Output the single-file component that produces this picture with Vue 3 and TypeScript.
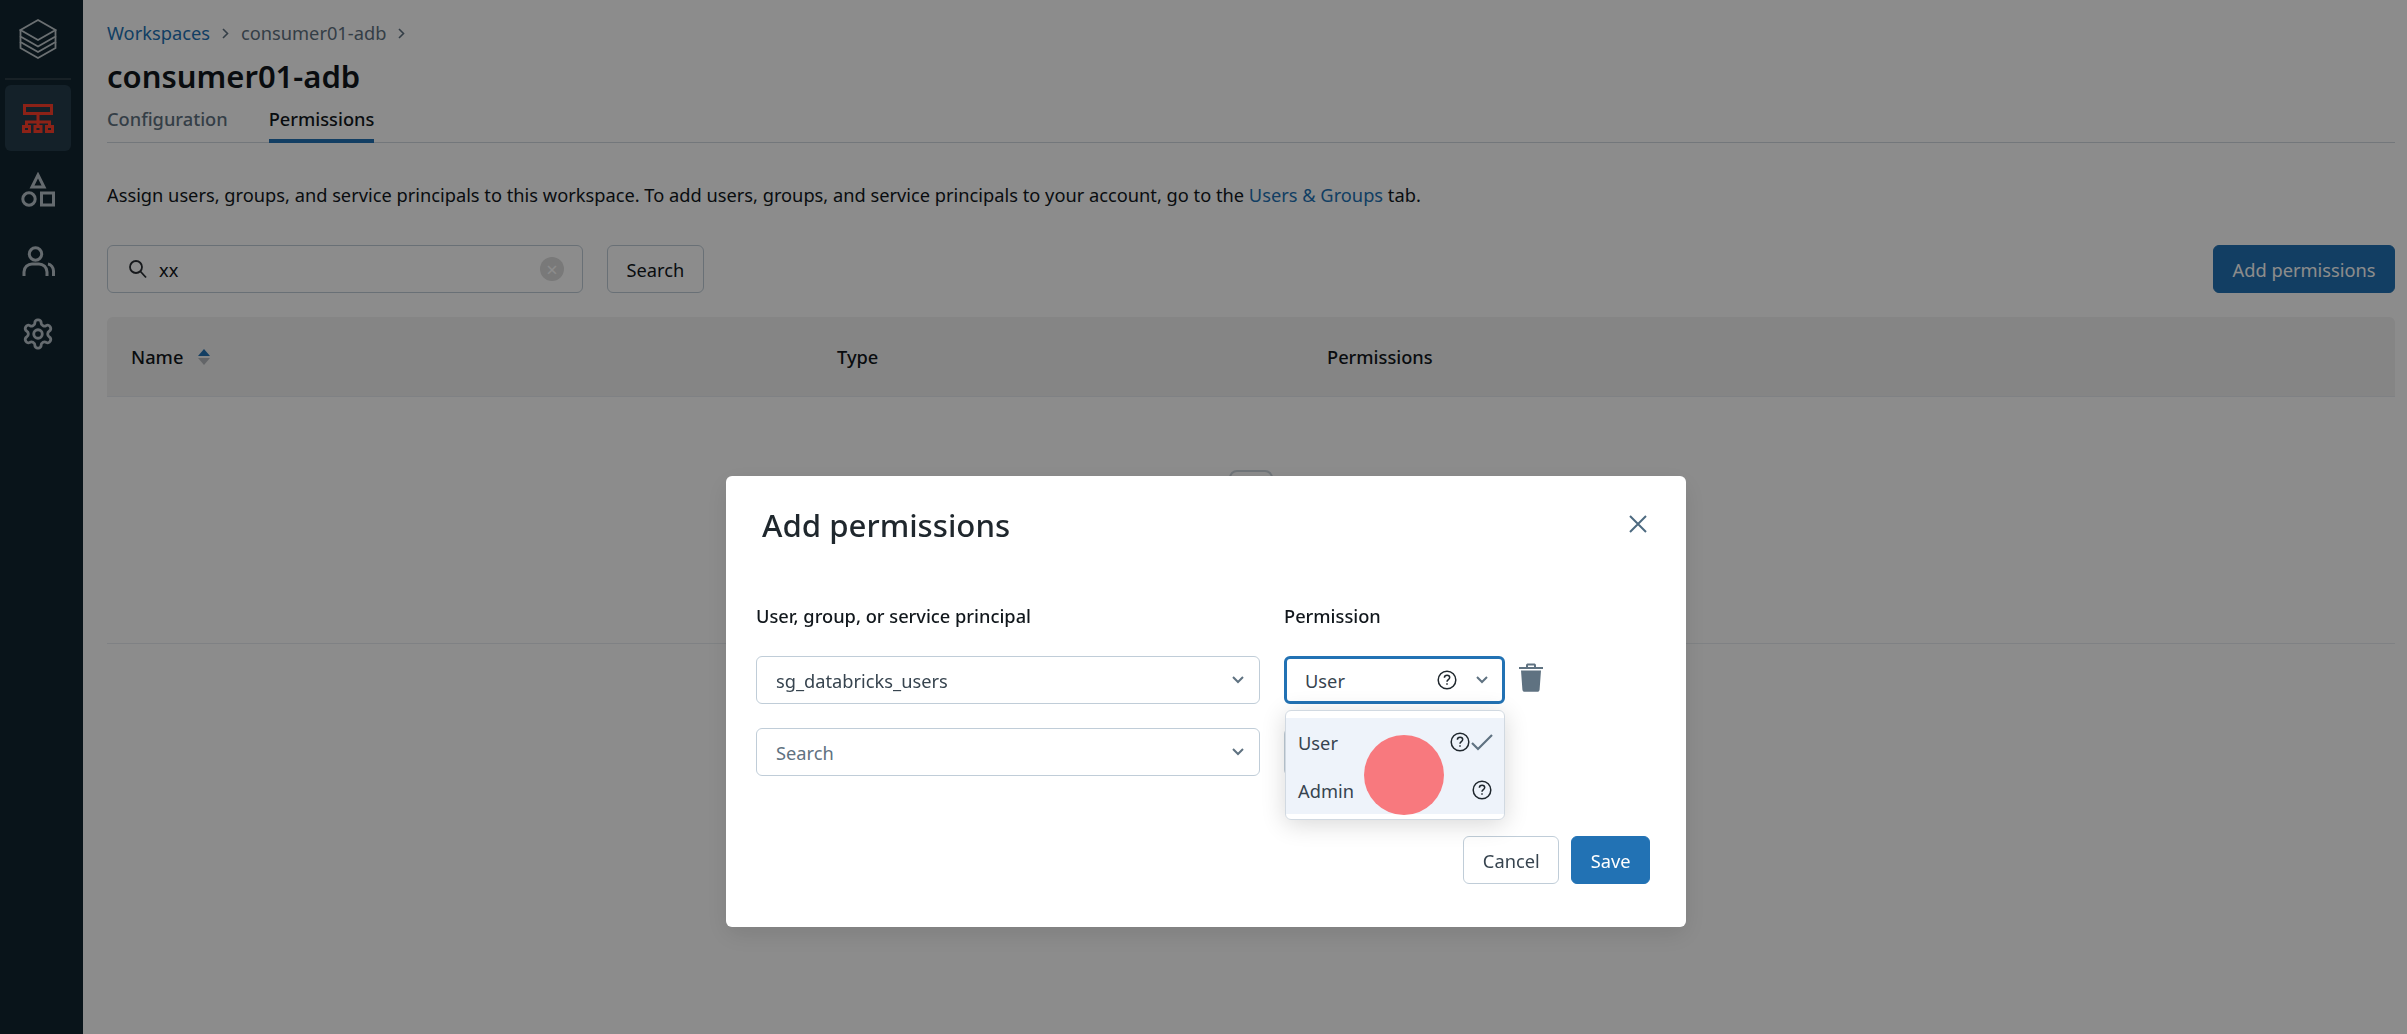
<template>
  <div class="page">
    <aside class="sidebar">
      <div class="logo">
        <svg width="40" height="42" viewBox="0 0 40 42" fill="none" stroke="#c4ccd0" stroke-width="1.8" stroke-linejoin="miter">
          <path d="M20 2 37.500 12 20 22 2.500 12Z" />
          <path d="M2.500 12v6.500L20 28.500l17.500-10V12" />
          <path d="M2.500 18.500V24L20 34l17.500-10v-5.500" />
          <path d="M2.500 24v6L20 40l17.500-10v-6" />
        </svg>
      </div>
      <div class="nav-divider"></div>
      <div class="nav-item active">
        <svg width="36" height="32" viewBox="0 0 36 32" fill="none" stroke="#ff3f2b" stroke-width="3">
          <rect x="4.500" y="3.500" width="27" height="8" />
          <path d="M18 13v10M6.500 23v-3h23v3" />
          <rect x="3.500" y="24.500" width="6" height="5" />
          <rect x="15" y="24.500" width="6" height="5" />
          <rect x="26.500" y="24.500" width="6" height="5" />
        </svg>
      </div>
      <div class="nav-item">
        <svg width="36" height="36" viewBox="0 0 36 36" fill="none" stroke="#b9c3ca" stroke-width="3">
          <path d="M18 3 24 15H12Z" />
          <circle cx="9" cy="27" r="6.200" />
          <rect x="21.500" y="21" width="12" height="12" />
        </svg>
      </div>
      <div class="nav-item">
        <svg width="34" height="34" viewBox="0 0 34 34" fill="none" stroke="#b9c3ca" stroke-width="3">
          <circle cx="14.500" cy="9" r="6.200" />
          <path d="M3 31v-4c0-5 4-8 8-8h7c4 0 8 3 8 8v4" />
          <path d="M27 19c3 .5 5.500 3.500 5.500 7v5" />
        </svg>
      </div>
      <div class="nav-item">
        <svg width="34" height="34" viewBox="0 0 24 24" fill="none" stroke="#b9c3ca" stroke-width="2">
          <path d="M12.220 2h-.44a2 2 0 0 0-2 2v.18a2 2 0 0 1-1 1.730l-.43.25a2 2 0 0 1-2 0l-.15-.08a2 2 0 0 0-2.730.73l-.22.38a2 2 0 0 0 .73 2.730l.15.1a2 2 0 0 1 1 1.720v.51a2 2 0 0 1-1 1.740l-.15.09a2 2 0 0 0-.73 2.730l.22.38a2 2 0 0 0 2.730.73l.15-.08a2 2 0 0 1 2 0l.43.25a2 2 0 0 1 1 1.730V20a2 2 0 0 0 2 2h.44a2 2 0 0 0 2-2v-.18a2 2 0 0 1 1-1.730l.43-.25a2 2 0 0 1 2 0l.15.08a2 2 0 0 0 2.730-.73l.22-.39a2 2 0 0 0-.73-2.730l-.15-.08a2 2 0 0 1-1-1.740v-.5a2 2 0 0 1 1-1.740l.15-.09a2 2 0 0 0 .73-2.730l-.22-.38a2 2 0 0 0-2.730-.73l-.15.08a2 2 0 0 1-2 0l-.43-.25a2 2 0 0 1-1-1.730V4a2 2 0 0 0-2-2z" />
          <circle cx="12" cy="12" r="3" />
        </svg>
      </div>
    </aside>

    <main class="content">
      <nav class="breadcrumb">
        <a class="link">Workspaces</a>
        <svg class="crumb-sep" width="7" height="11" viewBox="0 0 7 11" fill="none" stroke="#5f7281" stroke-width="1.600"><path d="m1 1 4.500 4.500L1 10" /></svg>
        <span class="muted">consumer01-adb</span>
        <svg class="crumb-sep" width="7" height="11" viewBox="0 0 7 11" fill="none" stroke="#5f7281" stroke-width="1.600"><path d="m1 1 4.500 4.500L1 10" /></svg>
      </nav>
      <h1 class="page-title">consumer01-adb</h1>
      <div class="tabs">
        <span class="tab">Configuration</span>
        <span class="tab selected">Permissions</span>
      </div>
      <p class="intro">
        Assign users, groups, and service principals to this workspace. To add users, groups, and service principals to your account, go to the
        <a class="link">Users &amp; Groups</a> tab.
      </p>
      <div class="toolbar">
        <div class="search-box">
          <svg width="20" height="20" viewBox="0 0 20 20" fill="none" stroke="#2a2f33" stroke-width="1.800">
            <circle cx="8" cy="8" r="6" />
            <path d="m12.500 12.500 5.500 6" />
          </svg>
          <span class="search-value">xx</span>
          <span class="clear-btn">×</span>
        </div>
        <button class="btn">Search</button>
        <button class="btn primary add-btn">Add permissions</button>
      </div>
      <div class="table-head">
        <div class="cell name-cell">
          Name
          <span class="sort"><i class="up"></i><i class="down"></i></span>
        </div>
        <div class="cell type-cell">Type</div>
        <div class="cell">Permissions</div>
      </div>
      <div class="table-empty"><div class="empty-icon"></div></div>
    </main>

    <div class="overlay">
      <section class="modal">
        <header class="modal-head">
          <h2>Add permissions</h2>
          <svg class="close" width="20" height="20" viewBox="0 0 20 20" stroke="#4d6a80" stroke-width="2">
            <path d="m2 2 16 16M18 2 2 18" />
          </svg>
        </header>
        <div class="form-grid">
          <label>User, group, or service principal</label>
          <label>Permission</label>
          <span></span>

          <div class="select">
            <span class="value">sg_databricks_users</span>
            <svg class="chev" width="12" height="8" viewBox="0 0 12 8" fill="none" stroke="#5f7281" stroke-width="2"><path d="m1 1 5 5 5-5" /></svg>
          </div>
          <div class="perm-wrap">
            <div class="select focused">
              <span class="value">User</span>
              <svg class="help" width="20" height="20" viewBox="0 0 20 20" fill="none" stroke="#1f272d" stroke-width="1.500">
                <circle cx="10" cy="10" r="8.800" />
                <path d="M7.400 7.800c0-1.500 1.200-2.500 2.700-2.500s2.600 1 2.600 2.300c0 2-2.700 2-2.700 4.100" />
                <path d="M10 13.300v1.500" />
              </svg>
              <svg class="chev" width="12" height="8" viewBox="0 0 12 8" fill="none" stroke="#5f7281" stroke-width="2"><path d="m1 1 5 5 5-5" /></svg>
            </div>
            <div class="menu">
              <div class="menu-list">
                <div class="menu-row">
                  <span>User</span>
                  <svg class="row-help" width="20" height="20" viewBox="0 0 20 20" fill="none" stroke="#1f272d" stroke-width="1.500">
                    <circle cx="10" cy="10" r="8.800" />
                    <path d="M7.400 7.800c0-1.500 1.200-2.500 2.700-2.500s2.600 1 2.600 2.300c0 2-2.700 2-2.700 4.100" />
                    <path d="M10 13.300v1.500" />
                  </svg>
                  <svg class="check" width="22" height="18" viewBox="0 0 22 18" fill="none" stroke="#5f7281" stroke-width="2.200"><path d="m1 10 6 6L21 2" /></svg>
                </div>
                <div class="menu-row">
                  <span>Admin</span>
                  <svg class="row-help" width="20" height="20" viewBox="0 0 20 20" fill="none" stroke="#1f272d" stroke-width="1.500">
                    <circle cx="10" cy="10" r="8.800" />
                    <path d="M7.400 7.800c0-1.500 1.200-2.500 2.700-2.500s2.600 1 2.600 2.300c0 2-2.700 2-2.700 4.100" />
                    <path d="M10 13.300v1.500" />
                  </svg>
                </div>
              </div>
            </div>
          </div>
          <svg class="trash" width="26" height="29" viewBox="0 0 26 29" fill="#5f7281">
            <path d="M8 2.500C8 1 9 .5 10 .5h6c1 0 2 .5 2 2V4h7v2H1V4h7zM10 2.500V4h6V2.500z" />
            <path d="M3 7.500h20l-1.400 19c-.1 1.400-1 2.300-2.400 2.300H6.800c-1.400 0-2.300-.9-2.400-2.300z" />
          </svg>

          <div class="select">
            <span class="value placeholder">Search</span>
            <svg class="chev" width="12" height="8" viewBox="0 0 12 8" fill="none" stroke="#5f7281" stroke-width="2"><path d="m1 1 5 5 5-5" /></svg>
          </div>
          <div class="select"></div>
          <span></span>
        </div>
        <footer class="modal-foot">
          <button class="btn">Cancel</button>
          <button class="btn primary">Save</button>
        </footer>
      </section>
      <div class="cursor-dot"></div>
    </div>
  </div>
</template>

<script setup lang="ts">
// static screen, nothing to wire up
</script>

<style>
html,
body {
  margin: 0;
  background: #fff;
}
</style>

<style scoped>
.page {
  display: flex;
  height: 1034px;
  overflow: hidden;
  font-family: "Noto Sans", sans-serif;
  font-size: 18.25px;
  color: #11171c;
  background: #fff;
}

.sidebar {
  width: 83px;
  flex-shrink: 0;
  box-sizing: border-box;
  padding-left: 5px;
  background: #122631;
  display: flex;
  flex-direction: column;
}
.logo {
  width: 66px;
  height: 78px;
  display: flex;
  align-items: center;
  justify-content: center;
}
.nav-divider {
  width: 66px;
  height: 2px;
  background: #2c3c46;
  margin-bottom: 5px;
}
.nav-item {
  width: 66px;
  height: 66px;
  margin-bottom: 6px;
  border-radius: 6px;
  display: flex;
  align-items: center;
  justify-content: center;
}
.nav-item.active {
  background: #263d4c;
}

.content {
  flex: 1;
  min-width: 0;
  padding: 21px 12px 0 24px;
}
.breadcrumb {
  height: 24px;
  line-height: 24px;
  display: flex;
  align-items: center;
  gap: 12px;
}
.link {
  color: #2272b4;
}
.muted {
  color: #5f7281;
}
.page-title {
  margin: 11px 0 0;
  height: 40px;
  line-height: 40px;
  font-size: 31px;
  font-weight: 600;
}
.tabs {
  display: flex;
  gap: 41px;
  height: 47px;
  border-bottom: 1px solid #d1d9e1;
  box-sizing: border-box;
}
.tab {
  font-weight: 500;
  color: #5f7281;
  line-height: 46px;
}
.tab.selected {
  color: #11171c;
  border-bottom: 4px solid #2272b4;
  box-sizing: border-box;
  height: 47px;
}
.intro {
  margin: 39px 0 0;
  line-height: 26px;
}
.toolbar {
  display: flex;
  gap: 24px;
  margin-top: 37px;
}
.search-box {
  width: 476px;
  height: 48px;
  box-sizing: border-box;
  border: 1px solid #c0cdd8;
  border-radius: 6px;
  display: flex;
  align-items: center;
  padding: 0 18px 0 20px;
  gap: 11px;
}
.search-value {
  flex: 1;
}
.clear-btn {
  width: 24px;
  height: 24px;
  border-radius: 50%;
  background: #dcdcdc;
  color: #fff;
  display: flex;
  align-items: center;
  justify-content: center;
  font-size: 20px;
}
.btn {
  font: inherit;
  height: 48px;
  padding: 0 18.5px;
  background: #fff;
  border: 1px solid #c0cdd8;
  border-radius: 6px;
  color: #11171c;
}
.btn.primary {
  background: #2272b4;
  border-color: #2272b4;
  color: #fff;
}
.add-btn {
  margin-left: auto;
}
.table-head {
  display: flex;
  height: 80px;
  margin-top: 24px;
  background: #f2f2f2;
  border-bottom: 1px solid #e8ecf0;
  border-radius: 6px 6px 0 0;
  box-sizing: border-box;
  align-items: center;
  font-weight: 500;
}
.cell {
  padding-left: 24px;
}
.name-cell {
  width: 706px;
  box-sizing: border-box;
  display: flex;
  align-items: center;
  gap: 15px;
}
.type-cell {
  width: 490px;
  box-sizing: border-box;
}
.sort {
  display: flex;
  flex-direction: column;
  gap: 2px;
}
.sort i {
  display: block;
  width: 0;
  height: 0;
  border-left: 6px solid transparent;
  border-right: 6px solid transparent;
}
.sort .up {
  border-bottom: 7px solid #2272b4;
}
.sort .down {
  border-top: 7px solid #b5b9bd;
}
.table-empty {
  height: 247px;
  border-bottom: 1px solid #e8ecf0;
  display: flex;
  justify-content: center;
  box-sizing: border-box;
  padding-top: 73px;
}
.empty-icon {
  width: 44px;
  height: 44px;
  box-sizing: border-box;
  border: 2px solid #cbd5dd;
  border-radius: 8px;
}

.overlay {
  position: fixed;
  inset: 0;
  background: rgba(0, 0, 0, 0.45);
}
.modal {
  position: absolute;
  left: 726px;
  top: 476px;
  width: 960px;
  height: 451px;
  box-sizing: border-box;
  background: #fff;
  border-radius: 6px;
  padding: 0 24px 0 30px;
  display: flex;
  flex-direction: column;
  box-shadow: 0 8px 24px rgba(0, 0, 0, 0.1);
}
.modal-head {
  height: 98px;
  display: flex;
  align-items: center;
  justify-content: space-between;
  padding-left: 6px;
}
.modal-head h2 {
  margin: 0;
  font-size: 31.2px;
  font-weight: 500;
  color: #1f272d;
}
.close {
  margin-right: 14px;
  margin-top: -2px;
}
.form-grid {
  display: grid;
  grid-template-columns: 504px 221px 40px;
  column-gap: 24px;
  grid-template-rows: 58px 48px 48px;
  row-gap: 24px;
}
.form-grid label {
  font-weight: 500;
  line-height: 26px;
  padding-top: 29px;
}
.select {
  height: 48px;
  box-sizing: border-box;
  border: 1px solid #c0cdd8;
  border-radius: 6px;
  display: flex;
  align-items: center;
  padding: 0 15px 0 19px;
  background: #fff;
}
.value {
  flex: 1;
  color: #37444f;
}
.placeholder {
  color: #5f7281;
}
.select.focused {
  border: 3px solid #2272b4;
  padding: 0 14px 0 18px;
}
.help {
  margin-right: 19px;
}
.perm-wrap {
  position: relative;
  z-index: 1;
}
.menu {
  position: absolute;
  left: 1px;
  right: 0;
  top: 54px;
  height: 110px;
  box-sizing: border-box;
  background: #fff;
  border: 1px solid #d1d9e1;
  border-radius: 6px;
  padding: 7px 0;
  box-shadow: 0 4px 24px rgba(0, 0, 0, 0.16);
}
.menu-list {
  background: #eef3fa;
}
.menu-row {
  height: 48px;
  display: flex;
  align-items: center;
  padding: 0 12px;
  color: #37444f;
}
.menu-row span {
  flex: 1;
}
.check {
  margin-left: 1px;
  margin-right: -1px;
}
.trash {
  margin-top: 7px;
  margin-left: -11px;
}
.modal-foot {
  margin-top: 60px;
  display: flex;
  justify-content: flex-end;
  gap: 12px;
  padding-right: 12px;
}
.modal-foot .btn {
  color: #37444f;
}
.modal-foot .btn.primary {
  color: #fff;
}
.cursor-dot {
  position: absolute;
  z-index: 2;
  left: 1364px;
  top: 735px;
  width: 80px;
  height: 80px;
  border-radius: 50%;
  background: #f8797e;
}
</style>
